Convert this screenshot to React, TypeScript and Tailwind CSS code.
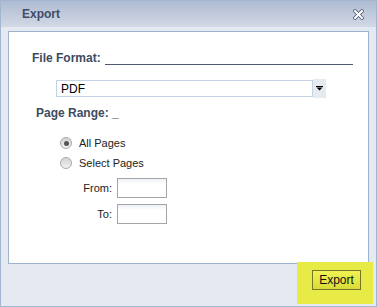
import React from "react";

function Radio({ checked }: { checked?: boolean }) {
  return (
    <div className="w-[12px] h-[12px] rounded-full border border-[#a9a9a9] bg-gradient-to-b from-[#d4d4d4] to-[#f2f2f2] flex items-center justify-center">
      {checked && <div className="w-[5px] h-[5px] rounded-full bg-[#555]" />}
    </div>
  );
}

export default function App() {
  return (
    <div
      className="relative w-[377px] h-[307px] border border-[#a3b6cf] bg-[#e5eaf2] flex flex-col"
      style={{ fontFamily: '"Liberation Sans", Arial, sans-serif' }}
    >
      {/* title bar */}
      <div className="h-[26px] shrink-0 bg-gradient-to-b from-[#aebbd2] to-[#d2d9e6] flex items-center justify-between pl-[21px] pr-[12px]">
        <span className="text-[12px] font-bold text-[#3e4d67]">Export</span>
        <svg width="11" height="11" viewBox="0 0 11 11">
          <path d="M2 2 L9 9 M9 2 L2 9" stroke="#4f5b70" strokeWidth="3.6" strokeLinecap="square" />
          <path d="M2 2 L9 9 M9 2 L2 9" stroke="#ffffff" strokeWidth="2" strokeLinecap="square" />
        </svg>
      </div>

      {/* body */}
      <div className="px-[7px] pt-[4px]">
        <div className="h-[233px] bg-white border border-[#9fb2cb] flex flex-col text-[#3d4b60]">
          {/* File format */}
          <div className="flex items-end pl-[23px] mt-[19px] h-[15px]">
            <span className="text-[12px] font-bold leading-[15px]">File Format:</span>
            <div className="ml-[4px] w-[248px] h-px bg-[#4d5a70] mb-[1px]" />
          </div>
          {/* select */}
          <div className="flex items-center ml-[47px] mt-[13px] h-[19px]">
            <div className="w-[257px] h-[17px] border border-[#c3d3e6] flex items-center pl-[4px] text-[12px] text-black">
              PDF
            </div>
            <div className="w-[13px] h-[19px] bg-[#e6eaf1] flex items-center justify-center">
              <svg width="7" height="5" viewBox="0 0 7 5">
                <rect x="0" y="0" width="7" height="1" fill="#000" />
                <path d="M0.5 1.5 H6.5 L3.5 4.5 Z" fill="#000" />
              </svg>
            </div>
          </div>
          {/* page range */}
          <div className="pl-[27px] mt-[8px] h-[15px] text-[12px] font-bold leading-[15px]">
            Page Range: _
          </div>
          {/* radios */}
          <div className="flex flex-col mt-[12px] pl-[51px] text-[11px] text-[#222]">
            <div className="flex items-center h-[20px] gap-[7px]">
              <Radio checked />
              <span>All Pages</span>
            </div>
            <div className="flex items-center h-[20px] gap-[7px]">
              <Radio />
              <span>Select Pages</span>
            </div>
          </div>
          {/* from / to */}
          <div className="flex flex-col gap-[6px] mt-[5px] text-[11px] text-[#222]">
            <div className="flex items-center">
              <span className="w-[108px] text-right pr-[5px]">From:</span>
              <div className="w-[50px] h-[20px] border border-[#a5a5a5] bg-gradient-to-b from-[#edf1f7] to-white to-[30%]" />
            </div>
            <div className="flex items-center">
              <span className="w-[108px] text-right pr-[5px]">To:</span>
              <div className="w-[50px] h-[20px] border border-[#a5a5a5] bg-gradient-to-b from-[#edf1f7] to-white to-[30%]" />
            </div>
          </div>
        </div>
      </div>

      {/* footer */}
      <div className="flex justify-end pr-[15px] pt-[6px]">
        <button className="relative z-10 w-[49px] h-[20px] border border-[#77752a] bg-gradient-to-b from-[#f1f354] to-[#d9db35] text-[12px] text-[#111] flex items-center justify-center">
          Export
        </button>
      </div>

      {/* highlight overlay */}
      <div className="absolute left-[296px] top-[261px] w-[76px] h-[42px] bg-[#e8ea46]" />
    </div>
  );
}
